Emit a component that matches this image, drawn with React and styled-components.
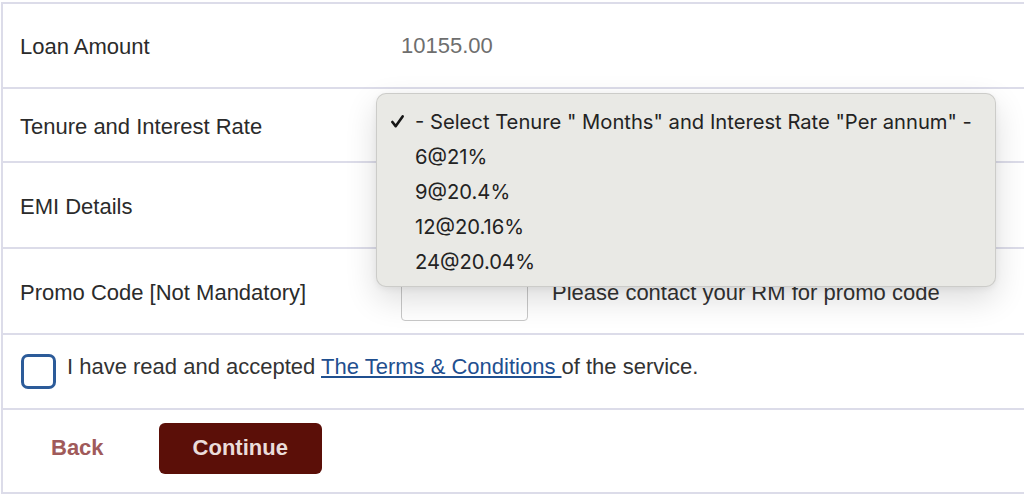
import React from "react";
import styled, { createGlobalStyle } from "styled-components";

const GlobalStyle = createGlobalStyle`
  html, body {
    margin: 0;
    padding: 0;
    background: #fff;
  }
  body {
    font-family: "Liberation Sans", Arial, sans-serif;
    color: #333;
  }
`;

const options = ["6@21%", "9@20.4%", "12@20.16%", "24@20.04%"];

const App = () => {
  return (
    <>
      <GlobalStyle />
      <Form>
        <Row $h={85}>
          <Label>Loan Amount</Label>
          <Value $muted>10155.00</Value>
        </Row>
        <Row $h={74}>
          <Label>Tenure and Interest Rate</Label>
          <Value>
            <SelectBox />
            <Menu>
              <MenuItem>
                <Check viewBox="0 0 14 14">
                  <path d="M1.5 7.5 L5 12 L12.5 1.5" />
                </Check>
                - Select Tenure " Months" and Interest Rate "Per annum" -
              </MenuItem>
              {options.map((o) => (
                <MenuItem key={o}>{o}</MenuItem>
              ))}
            </Menu>
          </Value>
        </Row>
        <Row $h={86}>
          <Label>EMI Details</Label>
          <Value />
        </Row>
        <Row $h={86}>
          <Label>Promo Code [Not Mandatory]</Label>
          <Value>
            <PromoInput />
            <Hint>Please contact your RM for promo code</Hint>
          </Value>
        </Row>
        <Row $h={75} $single>
          <Agree>
            <CheckBox />
            <AgreeText>
              I have read and accepted <TermsLink href="#">The Terms &amp; Conditions </TermsLink>
              of the service.
            </AgreeText>
          </Agree>
        </Row>
        <Row $h={84} $single $last>
          <Actions>
            <BackButton>Back</BackButton>
            <ContinueButton>Continue</ContinueButton>
          </Actions>
        </Row>
      </Form>
    </>
  );
};

export default App;

const lineColor = "#dcdce9";

const Form = styled.div`
  margin-top: 2px;
  margin-left: 1px;
  border-left: 2px solid ${lineColor};
  font-size: 22px;
`;

const Row = styled.div`
  position: relative;
  box-sizing: border-box;
  height: ${({ $h, $last }) => ($last ? $h + 2 : $h)}px;
  border-top: 2px solid ${lineColor};
  border-bottom: ${({ $last }) => ($last ? `2px solid ${lineColor}` : "none")};
  display: grid;
  grid-template-columns: ${({ $single }) => ($single ? "1fr" : "398px 1fr")};
  align-items: center;
`;

const Label = styled.div`
  padding: 3px 0 0 17px;
  color: #2b2b2b;
`;

const Value = styled.div`
  position: relative;
  height: 100%;
  display: flex;
  align-items: center;
  color: ${({ $muted }) => ($muted ? "#6e6e6e" : "#333")};
`;

const SelectBox = styled.div`
  width: 420px;
  height: 44px;
  border: 1px solid #ccc;
  border-radius: 4px;
`;

const Menu = styled.div`
  position: absolute;
  top: 4px;
  left: -25px;
  z-index: 10;
  box-sizing: border-box;
  width: 620px;
  padding: 10px 0 7px;
  background: #e9e9e5;
  border: 1px solid rgba(0, 0, 0, 0.12);
  border-radius: 10px;
  box-shadow: 0 12px 32px rgba(0, 0, 0, 0.14), 0 2px 6px rgba(0, 0, 0, 0.06);
  font-family: Inter, "Noto Sans", sans-serif;
  font-size: 20.2px;
  color: #232323;
`;

const MenuItem = styled.div`
  position: relative;
  height: 35px;
  line-height: 35px;
  padding-left: 38px;
  white-space: nowrap;
`;

const Check = styled.svg`
  position: absolute;
  left: 14px;
  top: 11px;
  width: 13px;
  height: 13px;
  fill: none;
  stroke: #151515;
  stroke-width: 2.8;
  stroke-linecap: round;
  stroke-linejoin: round;
`;

const PromoInput = styled.div`
  box-sizing: border-box;
  width: 127px;
  height: 58px;
  margin-top: 2px;
  border: 1px solid #c8c8c8;
  border-radius: 4px;
`;

const Hint = styled.span`
  margin: 3px 0 0 24px;
  color: #333;
`;

const Agree = styled.label`
  display: flex;
  align-items: center;
  gap: 11px;
  padding-left: 18px;
  color: #333;
`;

const AgreeText = styled.span`
  margin-bottom: 10px;
`;

const CheckBox = styled.span`
  box-sizing: border-box;
  width: 35px;
  height: 35px;
  border: 3px solid #2c5b99;
  border-radius: 7px;
  flex-shrink: 0;
`;

const TermsLink = styled.a`
  color: #1f4f8f;
  text-decoration: underline;
`;

const Actions = styled.div`
  display: flex;
  align-items: center;
  gap: 21px;
  padding-left: 14px;
  margin-top: -6px;
`;

const BaseButton = styled.button`
  height: 51px;
  padding: 0 34px;
  border: none;
  border-radius: 6px;
  font-family: "Liberation Sans", Arial, sans-serif;
  font-size: 22px;
  font-weight: bold;
  cursor: pointer;
`;

const BackButton = styled(BaseButton)`
  background: transparent;
  color: #a05a5a;
`;

const ContinueButton = styled(BaseButton)`
  background: #5b0f08;
  color: #eadcda;
`;
